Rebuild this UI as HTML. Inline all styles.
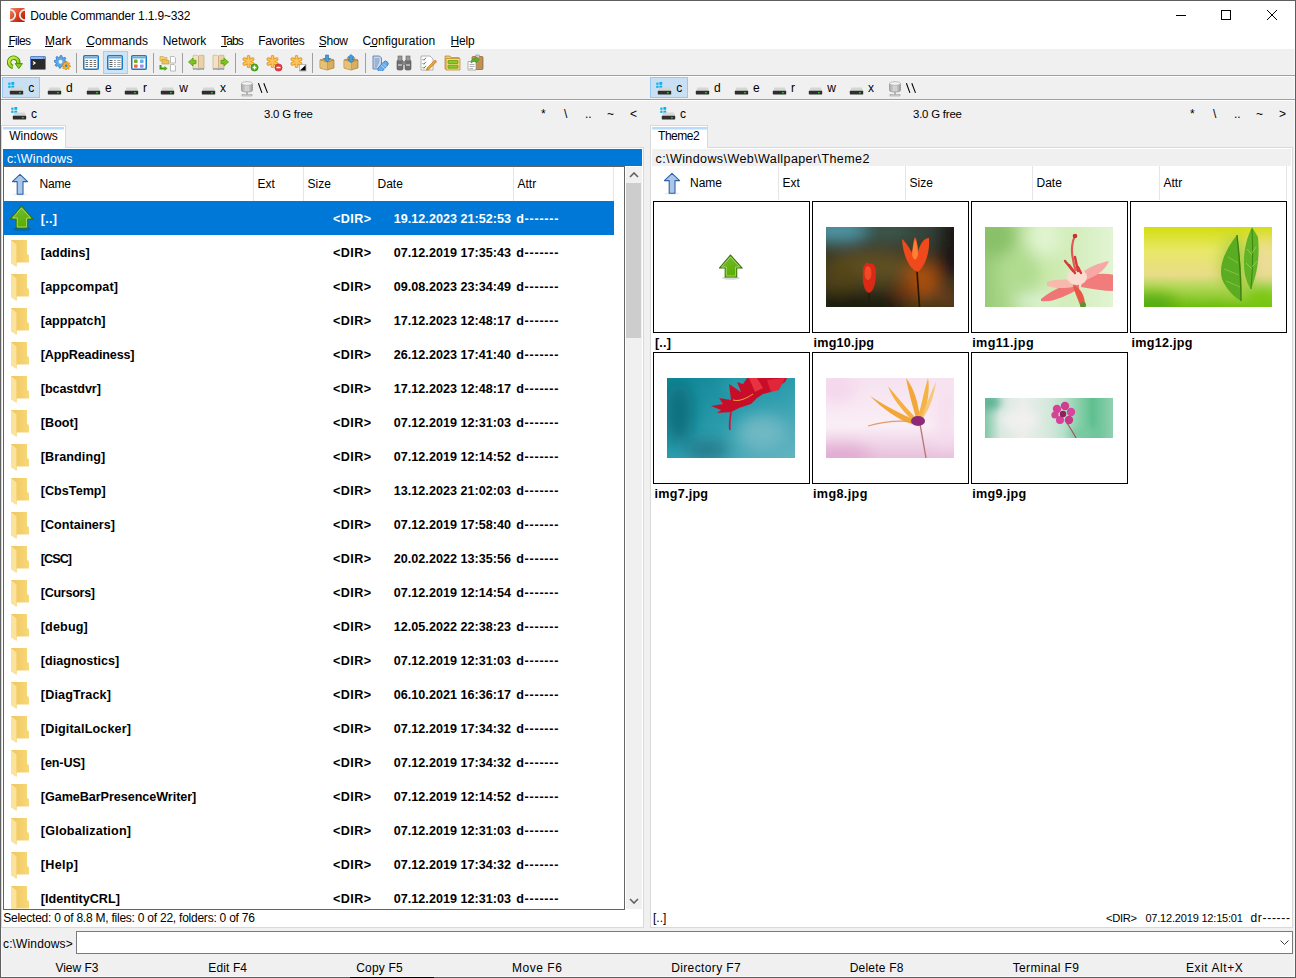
<!DOCTYPE html><html><head><meta charset="utf-8"><style>
*{margin:0;padding:0;box-sizing:border-box}
html,body{width:1296px;height:978px;overflow:hidden;background:#F0F0F0;font-family:"Liberation Sans",sans-serif;color:#000}
div{position:absolute;white-space:nowrap}
.btnsel{background:#C9DFF3;border:1px solid #98C8F0}
.sep{background:#A0A0A0;width:1px;top:53px;height:20px}
svg{display:block}
</style></head><body>
<div style="left:0;top:0;width:1296px;height:978px;border:1px solid #5F5F5F"></div>
<div style="left:350px;top:977px;width:84px;height:1px;background:#000"></div>
<div style="left:1px;top:1px;width:1294px;height:48px;background:#fff"></div>
<div style="left:1294px;top:49px;width:1px;height:928px;background:#F8F8F8"></div>
<div style="left:1px;top:49px;width:1px;height:928px;background:#F8F8F8"></div>
<div style="left:1px;top:976px;width:1294px;height:1px;background:#F8F8F8"></div>
<svg style="position:absolute;left:10px;top:8px" width="15" height="14" viewBox="0 0 15 14"><defs><linearGradient id="dcg" x1="0" y1="0" x2="1" y2="1"><stop offset="0" stop-color="#F08868"/><stop offset="0.6" stop-color="#D83818"/><stop offset="1" stop-color="#B01000"/></linearGradient><clipPath id="dcc"><rect x="0" y="0" width="15" height="14" rx="1.5"/></clipPath></defs><rect x="0" y="0" width="15" height="14" rx="1.5" fill="url(#dcg)"/><g clip-path="url(#dcc)"><circle cx="0" cy="7" r="5.2" stroke="#E4ECEE" stroke-width="1.8" fill="none"/><circle cx="15" cy="7" r="5.2" stroke="#E4ECEE" stroke-width="1.8" fill="none"/></g></svg>
<div style="left:30.20px;top:6px;font-size:12px;line-height:20px;letter-spacing:-0.164px;">Double Commander 1.1.9~332</div>
<div style="left:1176px;top:15px;width:10px;height:1px;background:#000"></div>
<div style="left:1221px;top:10px;width:10px;height:10px;border:1px solid #000"></div>
<svg style="position:absolute;left:1266px;top:9px" width="12" height="12" viewBox="0 0 12 12"><path d="M1 1L11 11M11 1L1 11" stroke="#000" stroke-width="1"/></svg>
<div style="left:8.40px;top:31px;font-size:12px;line-height:20px;letter-spacing:-0.688px;">Files</div>
<div style="left:45.00px;top:31px;font-size:12px;line-height:20px;letter-spacing:-0.033px;">Mark</div>
<div style="left:86.40px;top:31px;font-size:12px;line-height:20px;letter-spacing:0.021px;">Commands</div>
<div style="left:162.70px;top:31px;font-size:12px;line-height:20px;letter-spacing:-0.075px;">Network</div>
<div style="left:221.30px;top:31px;font-size:12px;line-height:20px;letter-spacing:-0.950px;">Tabs</div>
<div style="left:258.20px;top:31px;font-size:12px;line-height:20px;letter-spacing:-0.356px;">Favorites</div>
<div style="left:318.80px;top:31px;font-size:12px;line-height:20px;letter-spacing:-0.267px;">Show</div>
<div style="left:362.60px;top:31px;font-size:12px;line-height:20px;letter-spacing:0.092px;">Configuration</div>
<div style="left:450.50px;top:31px;font-size:12px;line-height:20px;letter-spacing:-0.183px;">Help</div>
<div style="left:8px;top:46px;width:6px;height:1px;background:#000"></div>
<div style="left:45px;top:46px;width:8px;height:1px;background:#000"></div>
<div style="left:86px;top:46px;width:8px;height:1px;background:#000"></div>
<div style="left:221px;top:46px;width:6px;height:1px;background:#000"></div>
<div style="left:319px;top:46px;width:7px;height:1px;background:#000"></div>
<div style="left:370px;top:46px;width:7px;height:1px;background:#000"></div>
<div style="left:451px;top:46px;width:8px;height:1px;background:#000"></div>
<div style="left:103px;top:51px;width:25px;height:23px;background:#CCE4F7;border:1px solid #99D1FF"></div>
<div class="sep" style="left:76px"></div>
<div class="sep" style="left:153px"></div>
<div class="sep" style="left:182px"></div>
<div class="sep" style="left:235px"></div>
<div class="sep" style="left:312px"></div>
<div class="sep" style="left:365px"></div>
<svg style="position:absolute;left:7px;top:55px" width="16" height="15" viewBox="0 0 16 15"><defs><linearGradient id="gr1" x1="0" y1="0" x2="1" y2="1"><stop offset="0" stop-color="#D8F050"/><stop offset="1" stop-color="#78C010"/></linearGradient></defs><path d="M5.9 11.8A4.6 4.6 0 1 1 11.1 8.5" stroke="#3F8F00" stroke-width="4.4" fill="none"/><path d="M5.9 11.8A4.6 4.6 0 1 1 11.1 8.5" stroke="url(#gr1)" stroke-width="2.6" fill="none"/><path d="M8.2 8.6L15.4 8.6L11.8 13.6Z" fill="#8CCB20" stroke="#3F8F00" stroke-width="0.9" stroke-linejoin="round"/></svg>
<svg style="position:absolute;left:30px;top:56px" width="16" height="14" viewBox="0 0 16 14"><rect x="0.5" y="0.5" width="15" height="13" rx="0.8" fill="#2B2B2B" stroke="#5A88CC" stroke-width="1"/><rect x="1" y="1" width="14" height="2" fill="#8DB6EC"/><circle cx="13.6" cy="2" r="0.7" fill="#E84030"/><path d="M3 5.5L5 7L3 8.5" stroke="#fff" stroke-width="1.3" fill="none"/></svg>
<svg style="position:absolute;left:54px;top:55px" width="17" height="15" viewBox="0 0 17 15"><polygon points="12.90,6.80 12.78,8.05 10.76,8.56 10.33,9.36 11.03,11.33 10.06,12.12 8.26,11.06 7.40,11.32 6.50,13.20 5.25,13.08 4.74,11.06 3.94,10.63 1.97,11.33 1.18,10.36 2.24,8.56 1.98,7.70 0.10,6.80 0.22,5.55 2.24,5.04 2.67,4.24 1.97,2.27 2.94,1.48 4.74,2.54 5.60,2.28 6.50,0.40 7.75,0.52 8.26,2.54 9.06,2.97 11.03,2.27 11.82,3.24 10.76,5.04 11.02,5.90" fill="#5AA8E8" stroke="#2E78C8" stroke-width="0.8"/><circle cx="6.5" cy="6.8" r="2.0" fill="#F0F0F0"/><polygon points="16.40,10.80 16.32,11.62 14.99,11.96 14.71,12.48 15.17,13.77 14.53,14.29 13.36,13.59 12.79,13.77 12.20,15.00 11.38,14.92 11.04,13.59 10.52,13.31 9.23,13.77 8.71,13.13 9.41,11.96 9.23,11.39 8.00,10.80 8.08,9.98 9.41,9.64 9.69,9.12 9.23,7.83 9.87,7.31 11.04,8.01 11.61,7.83 12.20,6.60 13.02,6.68 13.36,8.01 13.88,8.29 15.17,7.83 15.69,8.47 14.99,9.64 15.17,10.21" fill="#F6B02E" stroke="#D88A10" stroke-width="0.8"/><circle cx="12.2" cy="10.8" r="1.3" fill="#2E86E0"/></svg>
<svg style="position:absolute;left:83px;top:55px" width="16" height="15" viewBox="0 0 16 15"><rect x="0.75" y="0.75" width="14.5" height="13.5" rx="1" fill="#fff" stroke="#1C7BC0" stroke-width="1.5"/><rect x="2" y="2.2" width="12" height="1.2" fill="#3C9BE0"/><rect x="2.5" y="5" width="2.6" height="1" fill="#707070"/><rect x="6.6" y="5" width="2.6" height="1" fill="#707070"/><rect x="10.6" y="5" width="2.6" height="1" fill="#707070"/><rect x="2.5" y="7" width="2.6" height="1" fill="#707070"/><rect x="6.6" y="7" width="2.6" height="1" fill="#707070"/><rect x="10.6" y="7" width="2.6" height="1" fill="#707070"/><rect x="2.5" y="9" width="2.6" height="1" fill="#707070"/><rect x="6.6" y="9" width="2.6" height="1" fill="#707070"/><rect x="10.6" y="9" width="2.6" height="1" fill="#707070"/><rect x="2.5" y="11" width="2.6" height="1" fill="#707070"/><rect x="6.6" y="11" width="2.6" height="1" fill="#707070"/><rect x="10.6" y="11" width="2.6" height="1" fill="#707070"/></svg>
<svg style="position:absolute;left:107px;top:55px" width="16" height="15" viewBox="0 0 16 15"><rect x="0.75" y="0.75" width="14.5" height="13.5" rx="1" fill="#fff" stroke="#1C7BC0" stroke-width="1.5"/><rect x="2" y="2.2" width="12" height="1.2" fill="#3C9BE0"/><rect x="2.5" y="5" width="3" height="1" fill="#606060"/><rect x="7" y="5" width="2" height="1" fill="#A0A0A0"/><rect x="10.2" y="5" width="3.4" height="1" fill="#A0A0A0"/><rect x="2.5" y="7" width="3" height="1" fill="#606060"/><rect x="7" y="7" width="2" height="1" fill="#A0A0A0"/><rect x="10.2" y="7" width="3.4" height="1" fill="#A0A0A0"/><rect x="2.5" y="9" width="3" height="1" fill="#606060"/><rect x="7" y="9" width="2" height="1" fill="#A0A0A0"/><rect x="10.2" y="9" width="3.4" height="1" fill="#A0A0A0"/><rect x="2.5" y="11" width="3" height="1" fill="#606060"/><rect x="7" y="11" width="2" height="1" fill="#A0A0A0"/><rect x="10.2" y="11" width="3.4" height="1" fill="#A0A0A0"/></svg>
<svg style="position:absolute;left:131px;top:55px" width="16" height="15" viewBox="0 0 16 15"><rect x="0.75" y="0.75" width="14.5" height="13.5" rx="1" fill="#fff" stroke="#1C7BC0" stroke-width="1.5"/><rect x="2" y="2.2" width="12" height="1.2" fill="#3C9BE0"/><rect x="3" y="4.6" width="3.6" height="3.4" rx="0.8" fill="#78A820"/><rect x="9" y="4.6" width="3.6" height="3.4" rx="0.8" fill="#5CB0F0"/><rect x="3" y="9.4" width="3.6" height="3.4" rx="0.8" fill="#F06838"/><rect x="9" y="9.4" width="3.6" height="3.4" rx="0.8" fill="#A888F0"/></svg>
<svg style="position:absolute;left:159px;top:55px" width="18" height="17" viewBox="0 0 18 17"><path d="M1 1.5H4.5L5.5 2.5H8V6H1Z" fill="#F0D070" stroke="#C8A040" stroke-width="0.6"/><path d="M3 4.5H6.5L7.5 5.5H10V9H3Z" fill="#E8C460" stroke="#C09030" stroke-width="0.6"/><path d="M1.5 10V13.5H6" stroke="#3C9A10" stroke-width="2" fill="none"/><path d="M5.5 11L8.5 13.5L5.5 16Z" fill="#4CAA18"/><path d="M11.5 1.5H15L16.5 3V8H11.5Z" fill="#fff" stroke="#A0A0A0" stroke-width="0.7"/><path d="M11.5 9.5H15L16.5 11V16H11.5Z" fill="#fff" stroke="#A0A0A0" stroke-width="0.7"/></svg>
<svg style="position:absolute;left:188px;top:54px" width="17" height="17" viewBox="0 0 17 17"><path d="M5 1.5C7 1 9 1 10.5 2V15C9 14.2 7 14.2 5 15Z" fill="#F2E2C4" stroke="#C8A878" stroke-width="0.6"/><path d="M10.5 2C12 1 14 1 16 1.5V15C14 14.2 12 14.2 10.5 15Z" fill="#E8D2A8" stroke="#C0A070" stroke-width="0.6"/><path d="M5 15.3C7 14.8 9 14.8 10.5 15.6C12 14.8 14 14.8 16 15.3" stroke="#3A80D0" stroke-width="0.9" fill="none"/><path d="M0.5 8L5 4V6.3H8V9.7H5V12Z" fill="#7CC420" stroke="#4E9A00" stroke-width="0.7"/></svg>
<svg style="position:absolute;left:212px;top:54px" width="17" height="17" viewBox="0 0 17 17"><path d="M1 1.5C3 1 5 1 6.5 2V15C5 14.2 3 14.2 1 15Z" fill="#F2E2C4" stroke="#C8A878" stroke-width="0.6"/><path d="M6.5 2C8 1 10 1 12 1.5V15C10 14.2 8 14.2 6.5 15Z" fill="#E8D2A8" stroke="#C0A070" stroke-width="0.6"/><path d="M1 15.3C3 14.8 5 14.8 6.5 15.6C8 14.8 10 14.8 12 15.3" stroke="#3A80D0" stroke-width="0.9" fill="none"/><path d="M16.5 8L12 4V6.3H9V9.7H12V12Z" fill="#7CC420" stroke="#4E9A00" stroke-width="0.7"/></svg>
<svg style="position:absolute;left:242px;top:55px" width="17" height="17" viewBox="0 0 17 17"><g stroke="#E09018" stroke-width="3.6" stroke-linecap="round"><path d="M6.5 1.8V11.2M2.4 4.1L10.6 8.9M2.4 8.9L10.6 4.1"/></g><g stroke="#FBC45C" stroke-width="2.0" stroke-linecap="round"><path d="M6.5 1.8V11.2M2.4 4.1L10.6 8.9M2.4 8.9L10.6 4.1"/></g><circle cx="12.5" cy="12.5" r="3.6" fill="#4AAA1A" stroke="#2E8A00" stroke-width="0.6"/><path d="M10.6 12.5H14.4M12.5 10.6V14.4" stroke="#fff" stroke-width="1.3"/></svg>
<svg style="position:absolute;left:266px;top:55px" width="17" height="17" viewBox="0 0 17 17"><g stroke="#E09018" stroke-width="3.6" stroke-linecap="round"><path d="M6.5 1.8V11.2M2.4 4.1L10.6 8.9M2.4 8.9L10.6 4.1"/></g><g stroke="#FBC45C" stroke-width="2.0" stroke-linecap="round"><path d="M6.5 1.8V11.2M2.4 4.1L10.6 8.9M2.4 8.9L10.6 4.1"/></g><circle cx="12.5" cy="12.5" r="3.6" fill="#E04040" stroke="#B82020" stroke-width="0.6"/><path d="M10.5 12.5H14.5" stroke="#fff" stroke-width="1.4"/></svg>
<svg style="position:absolute;left:290px;top:55px" width="17" height="17" viewBox="0 0 17 17"><g stroke="#E09018" stroke-width="3.6" stroke-linecap="round"><path d="M6.5 1.8V11.2M2.4 4.1L10.6 8.9M2.4 8.9L10.6 4.1"/></g><g stroke="#FBC45C" stroke-width="2.0" stroke-linecap="round"><path d="M6.5 1.8V11.2M2.4 4.1L10.6 8.9M2.4 8.9L10.6 4.1"/></g><rect x="9.5" y="9.5" width="6.5" height="6.5" fill="#fff" stroke="#A0A0A0" stroke-width="0.7"/><path d="M10 15.6L15.6 10V15.6Z" fill="#000"/></svg>
<svg style="position:absolute;left:319px;top:54px" width="16" height="17" viewBox="0 0 16 17"><path d="M1 6L8 3.5L15 6V14L8 16L1 14Z" fill="#D8AE60" stroke="#A87830" stroke-width="0.7"/><path d="M1 6L8 8.3L15 6" stroke="#A87830" stroke-width="0.7" fill="none"/><path d="M8 8.3V16" stroke="#B88840" stroke-width="0.7"/><path d="M1.3 6.2L8 8.4V15.8L1.3 13.8Z" fill="#E6C278"/><path d="M8 8L4.5 4.8H6.5V1H9.5V4.8H11.5Z" fill="#3C9EE8" stroke="#1E70C0" stroke-width="0.6"/></svg>
<svg style="position:absolute;left:343px;top:54px" width="16" height="17" viewBox="0 0 16 17"><path d="M1 6L8 3.5L15 6V14L8 16L1 14Z" fill="#D8AE60" stroke="#A87830" stroke-width="0.7"/><path d="M1 6L8 8.3L15 6" stroke="#A87830" stroke-width="0.7" fill="none"/><path d="M8 8.3V16" stroke="#B88840" stroke-width="0.7"/><path d="M1.3 6.2L8 8.4V15.8L1.3 13.8Z" fill="#E6C278"/><path d="M8 0.5L11.5 3.5H9.5V5.5H11.5L8 8.5L4.5 5.5H6.5V3.5H4.5Z" fill="#3C9EE8" stroke="#1E70C0" stroke-width="0.6"/></svg>
<svg style="position:absolute;left:372px;top:55px" width="17" height="16" viewBox="0 0 17 16"><path d="M1 1H7.5L9.5 3V14H1Z" fill="#C8D8EC" stroke="#5A80B0" stroke-width="0.9"/><path d="M2.5 4H7.5M2.5 6H7.5M2.5 8H7M2.5 10H6M2.5 12H5" stroke="#6A8AB8" stroke-width="0.9"/><path d="M6.5 12.5L11.5 7A2.5 2.5 0 0 1 15.5 10.5L10.5 16A2.5 2.5 0 0 1 6.5 12.5Z" fill="#64ACEC" stroke="#2E74C0" stroke-width="0.8"/><path d="M9 10L13 14M11 8.5L14.5 12" stroke="#C8E4FA" stroke-width="0.7"/></svg>
<svg style="position:absolute;left:396px;top:55px" width="16" height="16" viewBox="0 0 16 16"><rect x="1" y="5" width="6" height="10" rx="1.5" fill="#707070" stroke="#505050" stroke-width="0.6"/><rect x="9" y="5" width="6" height="10" rx="1.5" fill="#707070" stroke="#505050" stroke-width="0.6"/><rect x="2" y="1" width="4" height="5" fill="#9A9A9A" stroke="#606060" stroke-width="0.6"/><rect x="10" y="1" width="4" height="5" fill="#9A9A9A" stroke="#606060" stroke-width="0.6"/><rect x="6.5" y="6" width="3" height="4" fill="#888"/><rect x="2" y="9" width="4" height="2" fill="#B0B0B0"/><rect x="10" y="9" width="4" height="2" fill="#B0B0B0"/></svg>
<svg style="position:absolute;left:420px;top:55px" width="17" height="16" viewBox="0 0 17 16"><path d="M1 1H10L13 4V15H1Z" fill="#fff" stroke="#A0A0A0" stroke-width="0.8"/><path d="M2.5 4L3.8 5.3L6 2.8M2.5 8L3.8 9.3L6 6.8M2.5 12L3.8 13.3L6 10.8" stroke="#30A030" stroke-width="1" fill="none"/><path d="M7 13L14.5 5.5L16.2 7.2L8.7 14.7L6.5 15.2Z" fill="#F0A030" stroke="#B07010" stroke-width="0.6"/><path d="M14.5 5.5L16.2 7.2L17 6.4L15.3 4.7Z" fill="#E878A8"/></svg>
<svg style="position:absolute;left:444px;top:54px" width="17" height="17" viewBox="0 0 17 17"><path d="M1 2H6L7 3.5H15V15H1Z" fill="#EFC870" stroke="#B88828" stroke-width="0.7"/><path d="M2 4.5H16V16H2Z" fill="#F6D888" stroke="#B88828" stroke-width="0.7"/><rect x="4" y="6.5" width="10" height="3" rx="0.5" fill="#8CC820" stroke="#4E9000" stroke-width="0.6"/><rect x="4" y="11.2" width="10" height="3" rx="0.5" fill="#8CC820" stroke="#4E9000" stroke-width="0.6"/></svg>
<svg style="position:absolute;left:467px;top:54px" width="17" height="17" viewBox="0 0 17 17"><rect x="5" y="2.5" width="11" height="13" rx="1" fill="#C09058" stroke="#886030" stroke-width="0.7"/><rect x="8.5" y="1" width="4" height="3" rx="0.8" fill="#D0D0D0" stroke="#808080" stroke-width="0.6"/><path d="M1 7.5H9V16H1Z" fill="#fff" stroke="#909090" stroke-width="0.7"/><path d="M2.5 10.5H7.5M2.5 12.5H7.5M2.5 14.5H6" stroke="#909090" stroke-width="0.7"/><path d="M4 9C4 6 6 4.5 9 4.5V2.8L12 5.8L9 8.8V7C7 7 5.5 7.8 4 9Z" fill="#5CB82A" stroke="#3A8A10" stroke-width="0.6"/></svg>
<div style="left:1px;top:75px;width:1294px;height:1px;background:#A0A0A0"></div>
<div style="left:1px;top:76px;width:1294px;height:1px;background:#FFFFFF"></div>
<div style="left:1px;top:99px;width:1294px;height:1px;background:#A0A0A0"></div>
<div style="left:1px;top:100px;width:1294px;height:1px;background:#FFFFFF"></div>
<div class="btnsel" style="left:2px;top:77px;width:38px;height:21px"></div>
<svg style="position:absolute;left:8px;top:82px" width="18" height="16" viewBox="0 0 18 16"><rect x="0.3" y="0.6" width="2.2" height="2.2" fill="#00B4F0"/><rect x="3.4" y="0" width="2.8" height="2.8" fill="#00B4F0"/><rect x="0.3" y="3.7" width="2.2" height="2.2" fill="#00B4F0"/><rect x="3.4" y="3.7" width="2.8" height="2.8" fill="#00B4F0"/><path d="M3.5 5.5H13.8L15.2 9H2.1Z" fill="#D6D6D6"/><rect x="1.8" y="8.8" width="13.4" height="3.6" rx="0.6" fill="#2E2E2E"/><rect x="11.2" y="10.1" width="1.4" height="1.2" fill="#3CF03C"/></svg>
<div style="left:28.20px;top:78px;font-size:12px;line-height:20px;">c</div>
<svg style="position:absolute;left:46px;top:82px" width="18" height="16" viewBox="0 0 18 16"><path d="M3.5 5.5H13.8L15.2 9H2.1Z" fill="#D6D6D6"/><rect x="1.8" y="8.8" width="13.4" height="3.6" rx="0.6" fill="#2E2E2E"/><rect x="11.2" y="10.1" width="1.4" height="1.2" fill="#3CF03C"/></svg>
<div style="left:66.00px;top:78px;font-size:12px;line-height:20px;">d</div>
<svg style="position:absolute;left:85px;top:82px" width="18" height="16" viewBox="0 0 18 16"><path d="M3.5 5.5H13.8L15.2 9H2.1Z" fill="#D6D6D6"/><rect x="1.8" y="8.8" width="13.4" height="3.6" rx="0.6" fill="#2E2E2E"/><rect x="11.2" y="10.1" width="1.4" height="1.2" fill="#3CF03C"/></svg>
<div style="left:105.00px;top:78px;font-size:12px;line-height:20px;">e</div>
<svg style="position:absolute;left:123px;top:82px" width="18" height="16" viewBox="0 0 18 16"><path d="M3.5 5.5H13.8L15.2 9H2.1Z" fill="#D6D6D6"/><rect x="1.8" y="8.8" width="13.4" height="3.6" rx="0.6" fill="#2E2E2E"/><rect x="11.2" y="10.1" width="1.4" height="1.2" fill="#3CF03C"/></svg>
<div style="left:143.00px;top:78px;font-size:12px;line-height:20px;">r</div>
<svg style="position:absolute;left:159px;top:82px" width="18" height="16" viewBox="0 0 18 16"><path d="M3.5 5.5H13.8L15.2 9H2.1Z" fill="#D6D6D6"/><rect x="1.8" y="8.8" width="13.4" height="3.6" rx="0.6" fill="#2E2E2E"/><rect x="11.2" y="10.1" width="1.4" height="1.2" fill="#3CF03C"/></svg>
<div style="left:179.25px;top:78px;font-size:12px;line-height:20px;">w</div>
<svg style="position:absolute;left:200px;top:82px" width="18" height="16" viewBox="0 0 18 16"><path d="M3.5 5.5H13.8L15.2 9H2.1Z" fill="#D6D6D6"/><rect x="1.8" y="8.8" width="13.4" height="3.6" rx="0.6" fill="#2E2E2E"/><rect x="11.2" y="10.1" width="1.4" height="1.2" fill="#3CF03C"/></svg>
<div style="left:220.00px;top:78px;font-size:12px;line-height:20px;">x</div>
<svg style="position:absolute;left:240px;top:81px" width="14" height="16" viewBox="0 0 14 16"><defs><linearGradient id="ng" x1="0" y1="0" x2="1" y2="0"><stop offset="0" stop-color="#A8A8A8"/><stop offset="0.5" stop-color="#E8E8E8"/><stop offset="1" stop-color="#9A9A9A"/></linearGradient></defs><path d="M1.5 2.5V9.5C1.5 11.5 12.5 11.5 12.5 9.5V2.5" fill="url(#ng)" stroke="#8a8a8a" stroke-width="0.6"/><ellipse cx="7" cy="2.5" rx="5.5" ry="1.8" fill="#F4F4F4" stroke="#9a9a9a" stroke-width="0.6"/><path d="M4 5V9M7 5V10M10 5V9" stroke="#B8B8B8" stroke-width="0.8"/><rect x="6.3" y="10.5" width="1.4" height="3" fill="#A0A0A0"/><rect x="2" y="13.6" width="10" height="1.4" fill="#D8D8D8" stroke="#909090" stroke-width="0.5"/></svg>
<svg style="position:absolute;left:256px;top:82px" width="14" height="13" viewBox="0 0 14 13"><path d="M2.4 1.3L5.9 10.9M7.8 1.3L11.5 10.9" stroke="#000" stroke-width="1.05"/></svg>
<div class="btnsel" style="left:650px;top:77px;width:38px;height:21px"></div>
<svg style="position:absolute;left:656px;top:82px" width="18" height="16" viewBox="0 0 18 16"><rect x="0.3" y="0.6" width="2.2" height="2.2" fill="#00B4F0"/><rect x="3.4" y="0" width="2.8" height="2.8" fill="#00B4F0"/><rect x="0.3" y="3.7" width="2.2" height="2.2" fill="#00B4F0"/><rect x="3.4" y="3.7" width="2.8" height="2.8" fill="#00B4F0"/><path d="M3.5 5.5H13.8L15.2 9H2.1Z" fill="#D6D6D6"/><rect x="1.8" y="8.8" width="13.4" height="3.6" rx="0.6" fill="#2E2E2E"/><rect x="11.2" y="10.1" width="1.4" height="1.2" fill="#3CF03C"/></svg>
<div style="left:676.20px;top:78px;font-size:12px;line-height:20px;">c</div>
<svg style="position:absolute;left:694px;top:82px" width="18" height="16" viewBox="0 0 18 16"><path d="M3.5 5.5H13.8L15.2 9H2.1Z" fill="#D6D6D6"/><rect x="1.8" y="8.8" width="13.4" height="3.6" rx="0.6" fill="#2E2E2E"/><rect x="11.2" y="10.1" width="1.4" height="1.2" fill="#3CF03C"/></svg>
<div style="left:714.00px;top:78px;font-size:12px;line-height:20px;">d</div>
<svg style="position:absolute;left:733px;top:82px" width="18" height="16" viewBox="0 0 18 16"><path d="M3.5 5.5H13.8L15.2 9H2.1Z" fill="#D6D6D6"/><rect x="1.8" y="8.8" width="13.4" height="3.6" rx="0.6" fill="#2E2E2E"/><rect x="11.2" y="10.1" width="1.4" height="1.2" fill="#3CF03C"/></svg>
<div style="left:753.00px;top:78px;font-size:12px;line-height:20px;">e</div>
<svg style="position:absolute;left:771px;top:82px" width="18" height="16" viewBox="0 0 18 16"><path d="M3.5 5.5H13.8L15.2 9H2.1Z" fill="#D6D6D6"/><rect x="1.8" y="8.8" width="13.4" height="3.6" rx="0.6" fill="#2E2E2E"/><rect x="11.2" y="10.1" width="1.4" height="1.2" fill="#3CF03C"/></svg>
<div style="left:791.00px;top:78px;font-size:12px;line-height:20px;">r</div>
<svg style="position:absolute;left:807px;top:82px" width="18" height="16" viewBox="0 0 18 16"><path d="M3.5 5.5H13.8L15.2 9H2.1Z" fill="#D6D6D6"/><rect x="1.8" y="8.8" width="13.4" height="3.6" rx="0.6" fill="#2E2E2E"/><rect x="11.2" y="10.1" width="1.4" height="1.2" fill="#3CF03C"/></svg>
<div style="left:827.25px;top:78px;font-size:12px;line-height:20px;">w</div>
<svg style="position:absolute;left:848px;top:82px" width="18" height="16" viewBox="0 0 18 16"><path d="M3.5 5.5H13.8L15.2 9H2.1Z" fill="#D6D6D6"/><rect x="1.8" y="8.8" width="13.4" height="3.6" rx="0.6" fill="#2E2E2E"/><rect x="11.2" y="10.1" width="1.4" height="1.2" fill="#3CF03C"/></svg>
<div style="left:868.00px;top:78px;font-size:12px;line-height:20px;">x</div>
<svg style="position:absolute;left:888px;top:81px" width="14" height="16" viewBox="0 0 14 16"><defs><linearGradient id="ng" x1="0" y1="0" x2="1" y2="0"><stop offset="0" stop-color="#A8A8A8"/><stop offset="0.5" stop-color="#E8E8E8"/><stop offset="1" stop-color="#9A9A9A"/></linearGradient></defs><path d="M1.5 2.5V9.5C1.5 11.5 12.5 11.5 12.5 9.5V2.5" fill="url(#ng)" stroke="#8a8a8a" stroke-width="0.6"/><ellipse cx="7" cy="2.5" rx="5.5" ry="1.8" fill="#F4F4F4" stroke="#9a9a9a" stroke-width="0.6"/><path d="M4 5V9M7 5V10M10 5V9" stroke="#B8B8B8" stroke-width="0.8"/><rect x="6.3" y="10.5" width="1.4" height="3" fill="#A0A0A0"/><rect x="2" y="13.6" width="10" height="1.4" fill="#D8D8D8" stroke="#909090" stroke-width="0.5"/></svg>
<svg style="position:absolute;left:904px;top:82px" width="14" height="13" viewBox="0 0 14 13"><path d="M2.4 1.3L5.9 10.9M7.8 1.3L11.5 10.9" stroke="#000" stroke-width="1.05"/></svg>
<svg style="position:absolute;left:11px;top:107px" width="18" height="16" viewBox="0 0 18 16"><rect x="0.3" y="0.6" width="2.2" height="2.2" fill="#00B4F0"/><rect x="3.4" y="0" width="2.8" height="2.8" fill="#00B4F0"/><rect x="0.3" y="3.7" width="2.2" height="2.2" fill="#00B4F0"/><rect x="3.4" y="3.7" width="2.8" height="2.8" fill="#00B4F0"/><path d="M3.5 5.5H13.8L15.2 9H2.1Z" fill="#D6D6D6"/><rect x="1.8" y="8.8" width="13.4" height="3.6" rx="0.6" fill="#2E2E2E"/><rect x="11.2" y="10.1" width="1.4" height="1.2" fill="#3CF03C"/></svg>
<div style="left:31.00px;top:104px;font-size:12px;line-height:20px;">c</div>
<div style="left:264.00px;top:104px;font-size:11.4px;line-height:20px;letter-spacing:-0.194px;">3.0 G free</div>
<div style="left:541.00px;top:104px;font-size:12px;line-height:20px;">*</div>
<div style="left:564.00px;top:104px;font-size:12px;line-height:20px;">\</div>
<div style="left:585.00px;top:104px;font-size:12px;line-height:20px;">..</div>
<div style="left:607.00px;top:104px;font-size:12px;line-height:20px;">~</div>
<div style="left:630.00px;top:104px;font-size:12px;line-height:20px;">&lt;</div>
<svg style="position:absolute;left:660px;top:107px" width="18" height="16" viewBox="0 0 18 16"><rect x="0.3" y="0.6" width="2.2" height="2.2" fill="#00B4F0"/><rect x="3.4" y="0" width="2.8" height="2.8" fill="#00B4F0"/><rect x="0.3" y="3.7" width="2.2" height="2.2" fill="#00B4F0"/><rect x="3.4" y="3.7" width="2.8" height="2.8" fill="#00B4F0"/><path d="M3.5 5.5H13.8L15.2 9H2.1Z" fill="#D6D6D6"/><rect x="1.8" y="8.8" width="13.4" height="3.6" rx="0.6" fill="#2E2E2E"/><rect x="11.2" y="10.1" width="1.4" height="1.2" fill="#3CF03C"/></svg>
<div style="left:680.00px;top:104px;font-size:12px;line-height:20px;">c</div>
<div style="left:913.00px;top:104px;font-size:11.4px;line-height:20px;letter-spacing:-0.194px;">3.0 G free</div>
<div style="left:1190.00px;top:104px;font-size:12px;line-height:20px;">*</div>
<div style="left:1213.00px;top:104px;font-size:12px;line-height:20px;">\</div>
<div style="left:1234.00px;top:104px;font-size:12px;line-height:20px;">..</div>
<div style="left:1256.00px;top:104px;font-size:12px;line-height:20px;">~</div>
<div style="left:1279.00px;top:104px;font-size:12px;line-height:20px;">&gt;</div>
<div style="left:1px;top:147px;width:643px;height:781px;border:1px solid #D9D9D9;background:#fff"></div>
<div style="left:650px;top:147px;width:643px;height:781px;border:1px solid #D9D9D9;background:#fff"></div>
<div style="left:1px;top:125px;width:65px;height:23px;background:#fff;border:1px solid #D9D9D9;border-bottom:none"></div>
<div style="left:3px;top:127px;width:61px;height:2px;background:#B8DBF9"></div>
<div style="left:3px;top:129px;width:61px;height:1px;background:#DCEDFC"></div>
<div style="left:9.30px;top:126px;font-size:12px;line-height:20px;letter-spacing:-0.025px;">Windows</div>
<div style="left:650px;top:125px;width:58px;height:23px;background:#fff;border:1px solid #D9D9D9;border-bottom:none"></div>
<div style="left:652px;top:127px;width:55px;height:2px;background:#B8DBF9"></div>
<div style="left:652px;top:129px;width:55px;height:1px;background:#DCEDFC"></div>
<div style="left:658.10px;top:126px;font-size:12px;line-height:20px;letter-spacing:-0.500px;">Theme2</div>
<div style="left:3px;top:149px;width:639px;height:17px;background:#0078D7"></div>
<div style="left:6.90px;top:149px;font-size:12.5px;line-height:20px;letter-spacing:0.200px;color:#fff;">c:\Windows</div>
<div style="left:652px;top:149px;width:639px;height:17px;background:#F0F0F0"></div>
<div style="left:655.50px;top:149px;font-size:12.5px;line-height:20px;letter-spacing:0.413px;">c:\Windows\Web\Wallpaper\Theme2</div>
<div style="left:3px;top:166px;width:622px;height:744px;border:1px solid #646464;background:#fff;overflow:hidden">
<svg style="position:absolute;left:8px;top:6px" width="20" height="24" viewBox="0 0 20 24"><ellipse cx="8" cy="21.5" rx="8" ry="1.2" fill="rgba(0,0,0,0.07)"/><path d="M8 1.4L15.6 8.6H11V21.2H5.2V8.6H0.4Z" fill="#AAC7E7" stroke="#2F62AA" stroke-width="1.1" stroke-linejoin="round"/></svg>
<div style="left:35.60px;top:7px;font-size:12px;line-height:20px;letter-spacing:-0.200px;">Name</div>
<div style="left:249px;top:0;width:1px;height:34px;background:#E5E5E5"></div>
<div style="left:253.50px;top:7px;font-size:12px;line-height:20px;">Ext</div>
<div style="left:299px;top:0;width:1px;height:34px;background:#E5E5E5"></div>
<div style="left:303.50px;top:7px;font-size:12px;line-height:20px;">Size</div>
<div style="left:369px;top:0;width:1px;height:34px;background:#E5E5E5"></div>
<div style="left:373.50px;top:7px;font-size:12px;line-height:20px;">Date</div>
<div style="left:509px;top:0;width:1px;height:34px;background:#E5E5E5"></div>
<div style="left:513.50px;top:7px;font-size:12px;line-height:20px;">Attr</div>
<div style="left:609px;top:0;width:1px;height:34px;background:#E5E5E5"></div>
<div style="left:0;top:34px;width:610px;height:34px;background:#0078D7"></div>
<svg style="position:absolute;left:6px;top:38px" width="26" height="26" viewBox="0 0 26 26"><defs><linearGradient id="gg638" x1="0" y1="0" x2="0.3" y2="1"><stop offset="0" stop-color="#7CB83A"/><stop offset="1" stop-color="#58B000"/></linearGradient></defs><ellipse cx="12" cy="24" rx="9" ry="1.8" fill="rgba(0,0,0,0.15)"/><path d="M11.5 1L23 14H17.7V23H6.2V14H0.5Z" fill="url(#gg638)" stroke="#3A7000" stroke-width="1.1" stroke-linejoin="miter"/><path d="M11.5 3L20.6 13H16.6V22H7.3V13H2.6Z" fill="none" stroke="#A8D870" stroke-width="0.9"/></svg>
<div style="left:36.80px;top:42px;font-size:12.6px;line-height:20px;font-weight:bold;letter-spacing:0.267px;color:#fff;">[..]</div>
<div style="left:329.00px;top:42px;font-size:12.6px;line-height:20px;font-weight:bold;letter-spacing:0.425px;color:#fff;">&lt;DIR&gt;</div>
<div style="left:389.80px;top:42px;font-size:12.6px;line-height:20px;font-weight:bold;letter-spacing:0.011px;color:#fff;">19.12.2023 21:52:53</div>
<div style="left:512.20px;top:42px;font-size:12.6px;line-height:20px;font-weight:bold;letter-spacing:0.729px;color:#fff;">d-------</div>
<svg style="position:absolute;left:6px;top:72px" width="20" height="28" viewBox="0 0 20 28"><defs><linearGradient id="fb" x1="0" y1="0" x2="1" y2="0"><stop offset="0" stop-color="#EEC660"/><stop offset="1" stop-color="#F8D878"/></linearGradient></defs><path d="M1 1H17V14.5L19 16.5V23.5H6V27.5L1 24Z" fill="url(#fb)"/><path d="M1 1L6.5 5.5V27.5L1 24Z" fill="#FCE39C"/><path d="M6.5 5.5V27.5" stroke="#F6D47A" stroke-width="0.6"/></svg>
<div style="left:36.80px;top:76px;font-size:12.6px;line-height:20px;font-weight:bold;letter-spacing:-0.014px;">[addins]</div>
<div style="left:329.00px;top:76px;font-size:12.6px;line-height:20px;font-weight:bold;letter-spacing:0.425px;">&lt;DIR&gt;</div>
<div style="left:389.80px;top:76px;font-size:12.6px;line-height:20px;font-weight:bold;letter-spacing:0.011px;">07.12.2019 17:35:43</div>
<div style="left:512.20px;top:76px;font-size:12.6px;line-height:20px;font-weight:bold;letter-spacing:0.729px;">d-------</div>
<svg style="position:absolute;left:6px;top:106px" width="20" height="28" viewBox="0 0 20 28"><defs><linearGradient id="fb" x1="0" y1="0" x2="1" y2="0"><stop offset="0" stop-color="#EEC660"/><stop offset="1" stop-color="#F8D878"/></linearGradient></defs><path d="M1 1H17V14.5L19 16.5V23.5H6V27.5L1 24Z" fill="url(#fb)"/><path d="M1 1L6.5 5.5V27.5L1 24Z" fill="#FCE39C"/><path d="M6.5 5.5V27.5" stroke="#F6D47A" stroke-width="0.6"/></svg>
<div style="left:36.80px;top:110px;font-size:12.6px;line-height:20px;font-weight:bold;letter-spacing:0.160px;">[appcompat]</div>
<div style="left:329.00px;top:110px;font-size:12.6px;line-height:20px;font-weight:bold;letter-spacing:0.425px;">&lt;DIR&gt;</div>
<div style="left:389.80px;top:110px;font-size:12.6px;line-height:20px;font-weight:bold;letter-spacing:0.011px;">09.08.2023 23:34:49</div>
<div style="left:512.20px;top:110px;font-size:12.6px;line-height:20px;font-weight:bold;letter-spacing:0.729px;">d-------</div>
<svg style="position:absolute;left:6px;top:140px" width="20" height="28" viewBox="0 0 20 28"><defs><linearGradient id="fb" x1="0" y1="0" x2="1" y2="0"><stop offset="0" stop-color="#EEC660"/><stop offset="1" stop-color="#F8D878"/></linearGradient></defs><path d="M1 1H17V14.5L19 16.5V23.5H6V27.5L1 24Z" fill="url(#fb)"/><path d="M1 1L6.5 5.5V27.5L1 24Z" fill="#FCE39C"/><path d="M6.5 5.5V27.5" stroke="#F6D47A" stroke-width="0.6"/></svg>
<div style="left:36.80px;top:144px;font-size:12.6px;line-height:20px;font-weight:bold;letter-spacing:0.044px;">[apppatch]</div>
<div style="left:329.00px;top:144px;font-size:12.6px;line-height:20px;font-weight:bold;letter-spacing:0.425px;">&lt;DIR&gt;</div>
<div style="left:389.80px;top:144px;font-size:12.6px;line-height:20px;font-weight:bold;letter-spacing:0.011px;">17.12.2023 12:48:17</div>
<div style="left:512.20px;top:144px;font-size:12.6px;line-height:20px;font-weight:bold;letter-spacing:0.729px;">d-------</div>
<svg style="position:absolute;left:6px;top:174px" width="20" height="28" viewBox="0 0 20 28"><defs><linearGradient id="fb" x1="0" y1="0" x2="1" y2="0"><stop offset="0" stop-color="#EEC660"/><stop offset="1" stop-color="#F8D878"/></linearGradient></defs><path d="M1 1H17V14.5L19 16.5V23.5H6V27.5L1 24Z" fill="url(#fb)"/><path d="M1 1L6.5 5.5V27.5L1 24Z" fill="#FCE39C"/><path d="M6.5 5.5V27.5" stroke="#F6D47A" stroke-width="0.6"/></svg>
<div style="left:36.80px;top:178px;font-size:12.6px;line-height:20px;font-weight:bold;letter-spacing:-0.162px;">[AppReadiness]</div>
<div style="left:329.00px;top:178px;font-size:12.6px;line-height:20px;font-weight:bold;letter-spacing:0.425px;">&lt;DIR&gt;</div>
<div style="left:389.80px;top:178px;font-size:12.6px;line-height:20px;font-weight:bold;letter-spacing:0.011px;">26.12.2023 17:41:40</div>
<div style="left:512.20px;top:178px;font-size:12.6px;line-height:20px;font-weight:bold;letter-spacing:0.729px;">d-------</div>
<svg style="position:absolute;left:6px;top:208px" width="20" height="28" viewBox="0 0 20 28"><defs><linearGradient id="fb" x1="0" y1="0" x2="1" y2="0"><stop offset="0" stop-color="#EEC660"/><stop offset="1" stop-color="#F8D878"/></linearGradient></defs><path d="M1 1H17V14.5L19 16.5V23.5H6V27.5L1 24Z" fill="url(#fb)"/><path d="M1 1L6.5 5.5V27.5L1 24Z" fill="#FCE39C"/><path d="M6.5 5.5V27.5" stroke="#F6D47A" stroke-width="0.6"/></svg>
<div style="left:36.80px;top:212px;font-size:12.6px;line-height:20px;font-weight:bold;letter-spacing:-0.089px;">[bcastdvr]</div>
<div style="left:329.00px;top:212px;font-size:12.6px;line-height:20px;font-weight:bold;letter-spacing:0.425px;">&lt;DIR&gt;</div>
<div style="left:389.80px;top:212px;font-size:12.6px;line-height:20px;font-weight:bold;letter-spacing:0.011px;">17.12.2023 12:48:17</div>
<div style="left:512.20px;top:212px;font-size:12.6px;line-height:20px;font-weight:bold;letter-spacing:0.729px;">d-------</div>
<svg style="position:absolute;left:6px;top:242px" width="20" height="28" viewBox="0 0 20 28"><defs><linearGradient id="fb" x1="0" y1="0" x2="1" y2="0"><stop offset="0" stop-color="#EEC660"/><stop offset="1" stop-color="#F8D878"/></linearGradient></defs><path d="M1 1H17V14.5L19 16.5V23.5H6V27.5L1 24Z" fill="url(#fb)"/><path d="M1 1L6.5 5.5V27.5L1 24Z" fill="#FCE39C"/><path d="M6.5 5.5V27.5" stroke="#F6D47A" stroke-width="0.6"/></svg>
<div style="left:36.80px;top:246px;font-size:12.6px;line-height:20px;font-weight:bold;letter-spacing:0.020px;">[Boot]</div>
<div style="left:329.00px;top:246px;font-size:12.6px;line-height:20px;font-weight:bold;letter-spacing:0.425px;">&lt;DIR&gt;</div>
<div style="left:389.80px;top:246px;font-size:12.6px;line-height:20px;font-weight:bold;letter-spacing:0.011px;">07.12.2019 12:31:03</div>
<div style="left:512.20px;top:246px;font-size:12.6px;line-height:20px;font-weight:bold;letter-spacing:0.729px;">d-------</div>
<svg style="position:absolute;left:6px;top:276px" width="20" height="28" viewBox="0 0 20 28"><defs><linearGradient id="fb" x1="0" y1="0" x2="1" y2="0"><stop offset="0" stop-color="#EEC660"/><stop offset="1" stop-color="#F8D878"/></linearGradient></defs><path d="M1 1H17V14.5L19 16.5V23.5H6V27.5L1 24Z" fill="url(#fb)"/><path d="M1 1L6.5 5.5V27.5L1 24Z" fill="#FCE39C"/><path d="M6.5 5.5V27.5" stroke="#F6D47A" stroke-width="0.6"/></svg>
<div style="left:36.80px;top:280px;font-size:12.6px;line-height:20px;font-weight:bold;letter-spacing:0.072px;">[Branding]</div>
<div style="left:329.00px;top:280px;font-size:12.6px;line-height:20px;font-weight:bold;letter-spacing:0.425px;">&lt;DIR&gt;</div>
<div style="left:389.80px;top:280px;font-size:12.6px;line-height:20px;font-weight:bold;letter-spacing:0.011px;">07.12.2019 12:14:52</div>
<div style="left:512.20px;top:280px;font-size:12.6px;line-height:20px;font-weight:bold;letter-spacing:0.729px;">d-------</div>
<svg style="position:absolute;left:6px;top:310px" width="20" height="28" viewBox="0 0 20 28"><defs><linearGradient id="fb" x1="0" y1="0" x2="1" y2="0"><stop offset="0" stop-color="#EEC660"/><stop offset="1" stop-color="#F8D878"/></linearGradient></defs><path d="M1 1H17V14.5L19 16.5V23.5H6V27.5L1 24Z" fill="url(#fb)"/><path d="M1 1L6.5 5.5V27.5L1 24Z" fill="#FCE39C"/><path d="M6.5 5.5V27.5" stroke="#F6D47A" stroke-width="0.6"/></svg>
<div style="left:36.80px;top:314px;font-size:12.6px;line-height:20px;font-weight:bold;letter-spacing:0.019px;">[CbsTemp]</div>
<div style="left:329.00px;top:314px;font-size:12.6px;line-height:20px;font-weight:bold;letter-spacing:0.425px;">&lt;DIR&gt;</div>
<div style="left:389.80px;top:314px;font-size:12.6px;line-height:20px;font-weight:bold;letter-spacing:0.011px;">13.12.2023 21:02:03</div>
<div style="left:512.20px;top:314px;font-size:12.6px;line-height:20px;font-weight:bold;letter-spacing:0.729px;">d-------</div>
<svg style="position:absolute;left:6px;top:344px" width="20" height="28" viewBox="0 0 20 28"><defs><linearGradient id="fb" x1="0" y1="0" x2="1" y2="0"><stop offset="0" stop-color="#EEC660"/><stop offset="1" stop-color="#F8D878"/></linearGradient></defs><path d="M1 1H17V14.5L19 16.5V23.5H6V27.5L1 24Z" fill="url(#fb)"/><path d="M1 1L6.5 5.5V27.5L1 24Z" fill="#FCE39C"/><path d="M6.5 5.5V27.5" stroke="#F6D47A" stroke-width="0.6"/></svg>
<div style="left:36.80px;top:348px;font-size:12.6px;line-height:20px;font-weight:bold;">[Containers]</div>
<div style="left:329.00px;top:348px;font-size:12.6px;line-height:20px;font-weight:bold;letter-spacing:0.425px;">&lt;DIR&gt;</div>
<div style="left:389.80px;top:348px;font-size:12.6px;line-height:20px;font-weight:bold;letter-spacing:0.011px;">07.12.2019 17:58:40</div>
<div style="left:512.20px;top:348px;font-size:12.6px;line-height:20px;font-weight:bold;letter-spacing:0.729px;">d-------</div>
<svg style="position:absolute;left:6px;top:378px" width="20" height="28" viewBox="0 0 20 28"><defs><linearGradient id="fb" x1="0" y1="0" x2="1" y2="0"><stop offset="0" stop-color="#EEC660"/><stop offset="1" stop-color="#F8D878"/></linearGradient></defs><path d="M1 1H17V14.5L19 16.5V23.5H6V27.5L1 24Z" fill="url(#fb)"/><path d="M1 1L6.5 5.5V27.5L1 24Z" fill="#FCE39C"/><path d="M6.5 5.5V27.5" stroke="#F6D47A" stroke-width="0.6"/></svg>
<div style="left:36.80px;top:382px;font-size:12.6px;line-height:20px;font-weight:bold;letter-spacing:-0.950px;">[CSC]</div>
<div style="left:329.00px;top:382px;font-size:12.6px;line-height:20px;font-weight:bold;letter-spacing:0.425px;">&lt;DIR&gt;</div>
<div style="left:389.80px;top:382px;font-size:12.6px;line-height:20px;font-weight:bold;letter-spacing:0.011px;">20.02.2022 13:35:56</div>
<div style="left:512.20px;top:382px;font-size:12.6px;line-height:20px;font-weight:bold;letter-spacing:0.729px;">d-------</div>
<svg style="position:absolute;left:6px;top:412px" width="20" height="28" viewBox="0 0 20 28"><defs><linearGradient id="fb" x1="0" y1="0" x2="1" y2="0"><stop offset="0" stop-color="#EEC660"/><stop offset="1" stop-color="#F8D878"/></linearGradient></defs><path d="M1 1H17V14.5L19 16.5V23.5H6V27.5L1 24Z" fill="url(#fb)"/><path d="M1 1L6.5 5.5V27.5L1 24Z" fill="#FCE39C"/><path d="M6.5 5.5V27.5" stroke="#F6D47A" stroke-width="0.6"/></svg>
<div style="left:36.80px;top:416px;font-size:12.6px;line-height:20px;font-weight:bold;letter-spacing:-0.306px;">[Cursors]</div>
<div style="left:329.00px;top:416px;font-size:12.6px;line-height:20px;font-weight:bold;letter-spacing:0.425px;">&lt;DIR&gt;</div>
<div style="left:389.80px;top:416px;font-size:12.6px;line-height:20px;font-weight:bold;letter-spacing:0.011px;">07.12.2019 12:14:54</div>
<div style="left:512.20px;top:416px;font-size:12.6px;line-height:20px;font-weight:bold;letter-spacing:0.729px;">d-------</div>
<svg style="position:absolute;left:6px;top:446px" width="20" height="28" viewBox="0 0 20 28"><defs><linearGradient id="fb" x1="0" y1="0" x2="1" y2="0"><stop offset="0" stop-color="#EEC660"/><stop offset="1" stop-color="#F8D878"/></linearGradient></defs><path d="M1 1H17V14.5L19 16.5V23.5H6V27.5L1 24Z" fill="url(#fb)"/><path d="M1 1L6.5 5.5V27.5L1 24Z" fill="#FCE39C"/><path d="M6.5 5.5V27.5" stroke="#F6D47A" stroke-width="0.6"/></svg>
<div style="left:36.80px;top:450px;font-size:12.6px;line-height:20px;font-weight:bold;letter-spacing:0.125px;">[debug]</div>
<div style="left:329.00px;top:450px;font-size:12.6px;line-height:20px;font-weight:bold;letter-spacing:0.425px;">&lt;DIR&gt;</div>
<div style="left:389.80px;top:450px;font-size:12.6px;line-height:20px;font-weight:bold;letter-spacing:0.011px;">12.05.2022 22:38:23</div>
<div style="left:512.20px;top:450px;font-size:12.6px;line-height:20px;font-weight:bold;letter-spacing:0.729px;">d-------</div>
<svg style="position:absolute;left:6px;top:480px" width="20" height="28" viewBox="0 0 20 28"><defs><linearGradient id="fb" x1="0" y1="0" x2="1" y2="0"><stop offset="0" stop-color="#EEC660"/><stop offset="1" stop-color="#F8D878"/></linearGradient></defs><path d="M1 1H17V14.5L19 16.5V23.5H6V27.5L1 24Z" fill="url(#fb)"/><path d="M1 1L6.5 5.5V27.5L1 24Z" fill="#FCE39C"/><path d="M6.5 5.5V27.5" stroke="#F6D47A" stroke-width="0.6"/></svg>
<div style="left:36.80px;top:484px;font-size:12.6px;line-height:20px;font-weight:bold;">[diagnostics]</div>
<div style="left:329.00px;top:484px;font-size:12.6px;line-height:20px;font-weight:bold;letter-spacing:0.425px;">&lt;DIR&gt;</div>
<div style="left:389.80px;top:484px;font-size:12.6px;line-height:20px;font-weight:bold;letter-spacing:0.011px;">07.12.2019 12:31:03</div>
<div style="left:512.20px;top:484px;font-size:12.6px;line-height:20px;font-weight:bold;letter-spacing:0.729px;">d-------</div>
<svg style="position:absolute;left:6px;top:514px" width="20" height="28" viewBox="0 0 20 28"><defs><linearGradient id="fb" x1="0" y1="0" x2="1" y2="0"><stop offset="0" stop-color="#EEC660"/><stop offset="1" stop-color="#F8D878"/></linearGradient></defs><path d="M1 1H17V14.5L19 16.5V23.5H6V27.5L1 24Z" fill="url(#fb)"/><path d="M1 1L6.5 5.5V27.5L1 24Z" fill="#FCE39C"/><path d="M6.5 5.5V27.5" stroke="#F6D47A" stroke-width="0.6"/></svg>
<div style="left:36.80px;top:518px;font-size:12.6px;line-height:20px;font-weight:bold;letter-spacing:0.150px;">[DiagTrack]</div>
<div style="left:329.00px;top:518px;font-size:12.6px;line-height:20px;font-weight:bold;letter-spacing:0.425px;">&lt;DIR&gt;</div>
<div style="left:389.80px;top:518px;font-size:12.6px;line-height:20px;font-weight:bold;letter-spacing:0.011px;">06.10.2021 16:36:17</div>
<div style="left:512.20px;top:518px;font-size:12.6px;line-height:20px;font-weight:bold;letter-spacing:0.729px;">d-------</div>
<svg style="position:absolute;left:6px;top:548px" width="20" height="28" viewBox="0 0 20 28"><defs><linearGradient id="fb" x1="0" y1="0" x2="1" y2="0"><stop offset="0" stop-color="#EEC660"/><stop offset="1" stop-color="#F8D878"/></linearGradient></defs><path d="M1 1H17V14.5L19 16.5V23.5H6V27.5L1 24Z" fill="url(#fb)"/><path d="M1 1L6.5 5.5V27.5L1 24Z" fill="#FCE39C"/><path d="M6.5 5.5V27.5" stroke="#F6D47A" stroke-width="0.6"/></svg>
<div style="left:36.80px;top:552px;font-size:12.6px;line-height:20px;font-weight:bold;letter-spacing:0.146px;">[DigitalLocker]</div>
<div style="left:329.00px;top:552px;font-size:12.6px;line-height:20px;font-weight:bold;letter-spacing:0.425px;">&lt;DIR&gt;</div>
<div style="left:389.80px;top:552px;font-size:12.6px;line-height:20px;font-weight:bold;letter-spacing:0.011px;">07.12.2019 17:34:32</div>
<div style="left:512.20px;top:552px;font-size:12.6px;line-height:20px;font-weight:bold;letter-spacing:0.729px;">d-------</div>
<svg style="position:absolute;left:6px;top:582px" width="20" height="28" viewBox="0 0 20 28"><defs><linearGradient id="fb" x1="0" y1="0" x2="1" y2="0"><stop offset="0" stop-color="#EEC660"/><stop offset="1" stop-color="#F8D878"/></linearGradient></defs><path d="M1 1H17V14.5L19 16.5V23.5H6V27.5L1 24Z" fill="url(#fb)"/><path d="M1 1L6.5 5.5V27.5L1 24Z" fill="#FCE39C"/><path d="M6.5 5.5V27.5" stroke="#F6D47A" stroke-width="0.6"/></svg>
<div style="left:36.80px;top:586px;font-size:12.6px;line-height:20px;font-weight:bold;letter-spacing:-0.108px;">[en-US]</div>
<div style="left:329.00px;top:586px;font-size:12.6px;line-height:20px;font-weight:bold;letter-spacing:0.425px;">&lt;DIR&gt;</div>
<div style="left:389.80px;top:586px;font-size:12.6px;line-height:20px;font-weight:bold;letter-spacing:0.011px;">07.12.2019 17:34:32</div>
<div style="left:512.20px;top:586px;font-size:12.6px;line-height:20px;font-weight:bold;letter-spacing:0.729px;">d-------</div>
<svg style="position:absolute;left:6px;top:616px" width="20" height="28" viewBox="0 0 20 28"><defs><linearGradient id="fb" x1="0" y1="0" x2="1" y2="0"><stop offset="0" stop-color="#EEC660"/><stop offset="1" stop-color="#F8D878"/></linearGradient></defs><path d="M1 1H17V14.5L19 16.5V23.5H6V27.5L1 24Z" fill="url(#fb)"/><path d="M1 1L6.5 5.5V27.5L1 24Z" fill="#FCE39C"/><path d="M6.5 5.5V27.5" stroke="#F6D47A" stroke-width="0.6"/></svg>
<div style="left:36.80px;top:620px;font-size:12.6px;line-height:20px;font-weight:bold;letter-spacing:-0.048px;">[GameBarPresenceWriter]</div>
<div style="left:329.00px;top:620px;font-size:12.6px;line-height:20px;font-weight:bold;letter-spacing:0.425px;">&lt;DIR&gt;</div>
<div style="left:389.80px;top:620px;font-size:12.6px;line-height:20px;font-weight:bold;letter-spacing:0.011px;">07.12.2019 12:14:52</div>
<div style="left:512.20px;top:620px;font-size:12.6px;line-height:20px;font-weight:bold;letter-spacing:0.729px;">d-------</div>
<svg style="position:absolute;left:6px;top:650px" width="20" height="28" viewBox="0 0 20 28"><defs><linearGradient id="fb" x1="0" y1="0" x2="1" y2="0"><stop offset="0" stop-color="#EEC660"/><stop offset="1" stop-color="#F8D878"/></linearGradient></defs><path d="M1 1H17V14.5L19 16.5V23.5H6V27.5L1 24Z" fill="url(#fb)"/><path d="M1 1L6.5 5.5V27.5L1 24Z" fill="#FCE39C"/><path d="M6.5 5.5V27.5" stroke="#F6D47A" stroke-width="0.6"/></svg>
<div style="left:36.80px;top:654px;font-size:12.6px;line-height:20px;font-weight:bold;letter-spacing:0.200px;">[Globalization]</div>
<div style="left:329.00px;top:654px;font-size:12.6px;line-height:20px;font-weight:bold;letter-spacing:0.425px;">&lt;DIR&gt;</div>
<div style="left:389.80px;top:654px;font-size:12.6px;line-height:20px;font-weight:bold;letter-spacing:0.011px;">07.12.2019 12:31:03</div>
<div style="left:512.20px;top:654px;font-size:12.6px;line-height:20px;font-weight:bold;letter-spacing:0.729px;">d-------</div>
<svg style="position:absolute;left:6px;top:684px" width="20" height="28" viewBox="0 0 20 28"><defs><linearGradient id="fb" x1="0" y1="0" x2="1" y2="0"><stop offset="0" stop-color="#EEC660"/><stop offset="1" stop-color="#F8D878"/></linearGradient></defs><path d="M1 1H17V14.5L19 16.5V23.5H6V27.5L1 24Z" fill="url(#fb)"/><path d="M1 1L6.5 5.5V27.5L1 24Z" fill="#FCE39C"/><path d="M6.5 5.5V27.5" stroke="#F6D47A" stroke-width="0.6"/></svg>
<div style="left:36.80px;top:688px;font-size:12.6px;line-height:20px;font-weight:bold;letter-spacing:0.270px;">[Help]</div>
<div style="left:329.00px;top:688px;font-size:12.6px;line-height:20px;font-weight:bold;letter-spacing:0.425px;">&lt;DIR&gt;</div>
<div style="left:389.80px;top:688px;font-size:12.6px;line-height:20px;font-weight:bold;letter-spacing:0.011px;">07.12.2019 17:34:32</div>
<div style="left:512.20px;top:688px;font-size:12.6px;line-height:20px;font-weight:bold;letter-spacing:0.729px;">d-------</div>
<svg style="position:absolute;left:6px;top:718px" width="20" height="28" viewBox="0 0 20 28"><defs><linearGradient id="fb" x1="0" y1="0" x2="1" y2="0"><stop offset="0" stop-color="#EEC660"/><stop offset="1" stop-color="#F8D878"/></linearGradient></defs><path d="M1 1H17V14.5L19 16.5V23.5H6V27.5L1 24Z" fill="url(#fb)"/><path d="M1 1L6.5 5.5V27.5L1 24Z" fill="#FCE39C"/><path d="M6.5 5.5V27.5" stroke="#F6D47A" stroke-width="0.6"/></svg>
<div style="left:36.80px;top:722px;font-size:12.6px;line-height:20px;font-weight:bold;">[IdentityCRL]</div>
<div style="left:329.00px;top:722px;font-size:12.6px;line-height:20px;font-weight:bold;letter-spacing:0.425px;">&lt;DIR&gt;</div>
<div style="left:389.80px;top:722px;font-size:12.6px;line-height:20px;font-weight:bold;letter-spacing:0.011px;">07.12.2019 12:31:03</div>
<div style="left:512.20px;top:722px;font-size:12.6px;line-height:20px;font-weight:bold;letter-spacing:0.729px;">d-------</div>
</div>
<div style="left:626px;top:167px;width:16px;height:742px;background:#F0F0F0"></div>
<div style="left:626px;top:183px;width:15px;height:155px;background:#CDCDCD"></div>
<svg style="position:absolute;left:629px;top:172px" width="10" height="6" viewBox="0 0 10 6"><path d="M1 5L5 1L9 5" stroke="#606060" stroke-width="1.6" fill="none"/></svg>
<svg style="position:absolute;left:629px;top:898px" width="10" height="6" viewBox="0 0 10 6"><path d="M1 1L5 5L9 1" stroke="#606060" stroke-width="1.6" fill="none"/></svg>
<svg style="position:absolute;left:664px;top:172px" width="20" height="24" viewBox="0 0 20 24"><ellipse cx="8" cy="21.5" rx="8" ry="1.2" fill="rgba(0,0,0,0.07)"/><path d="M8 1.4L15.6 8.6H11V21.2H5.2V8.6H0.4Z" fill="#AAC7E7" stroke="#2F62AA" stroke-width="1.1" stroke-linejoin="round"/></svg>
<div style="left:690.00px;top:173px;font-size:12px;line-height:20px;">Name</div>
<div style="left:778px;top:166px;width:1px;height:34px;background:#E5E5E5"></div>
<div style="left:782.50px;top:173px;font-size:12px;line-height:20px;">Ext</div>
<div style="left:905px;top:166px;width:1px;height:34px;background:#E5E5E5"></div>
<div style="left:909.50px;top:173px;font-size:12px;line-height:20px;">Size</div>
<div style="left:1032px;top:166px;width:1px;height:34px;background:#E5E5E5"></div>
<div style="left:1036.50px;top:173px;font-size:12px;line-height:20px;">Date</div>
<div style="left:1159px;top:166px;width:1px;height:34px;background:#E5E5E5"></div>
<div style="left:1163.50px;top:173px;font-size:12px;line-height:20px;">Attr</div>
<div style="left:1286px;top:166px;width:1px;height:34px;background:#E5E5E5"></div>
<div style="left:653px;top:201px;width:157px;height:132px;border:1px solid #000"></div>
<div style="left:655.00px;top:333px;font-size:12.6px;line-height:20px;font-weight:bold;letter-spacing:0.167px;">[..]</div>
<div style="left:812px;top:201px;width:157px;height:132px;border:1px solid #000"></div>
<div style="left:813.50px;top:333px;font-size:12.6px;line-height:20px;font-weight:bold;letter-spacing:0.219px;">img10.jpg</div>
<div style="left:971px;top:201px;width:157px;height:132px;border:1px solid #000"></div>
<div style="left:972.20px;top:333px;font-size:12.6px;line-height:20px;font-weight:bold;letter-spacing:0.412px;">img11.jpg</div>
<div style="left:1130px;top:201px;width:157px;height:132px;border:1px solid #000"></div>
<div style="left:1131.50px;top:333px;font-size:12.6px;line-height:20px;font-weight:bold;letter-spacing:0.256px;">img12.jpg</div>
<div style="left:653px;top:352px;width:157px;height:132px;border:1px solid #000"></div>
<div style="left:654.50px;top:484px;font-size:12.6px;line-height:20px;font-weight:bold;letter-spacing:0.250px;">img7.jpg</div>
<div style="left:812px;top:352px;width:157px;height:132px;border:1px solid #000"></div>
<div style="left:813.00px;top:484px;font-size:12.6px;line-height:20px;font-weight:bold;letter-spacing:0.364px;">img8.jpg</div>
<div style="left:971px;top:352px;width:157px;height:132px;border:1px solid #000"></div>
<div style="left:972.30px;top:484px;font-size:12.6px;line-height:20px;font-weight:bold;letter-spacing:0.307px;">img9.jpg</div>
<svg style="position:absolute;left:826px;top:227px" width="128" height="80" viewBox="0 0 128 80"><defs><filter id="i10b8" x="-50%" y="-50%" width="200%" height="200%"><feGaussianBlur stdDeviation="8"/></filter><filter id="i10b4" x="-50%" y="-50%" width="200%" height="200%"><feGaussianBlur stdDeviation="4"/></filter><filter id="i10b2" x="-50%" y="-50%" width="200%" height="200%"><feGaussianBlur stdDeviation="1.6"/></filter><filter id="i10b1" x="-50%" y="-50%" width="200%" height="200%"><feGaussianBlur stdDeviation="0.7"/></filter><clipPath id="i10c"><rect width="128" height="80"/></clipPath></defs><g clip-path="url(#i10c)"><rect width="128" height="80" fill="#3A3620"/><g filter="url(#i10b8)"><rect x="-10" y="-10" width="150" height="30" fill="#34443A"/><ellipse cx="12" cy="2" rx="30" ry="12" fill="#5098A8"/><ellipse cx="62" cy="4" rx="22" ry="8" fill="#3C5A50"/><ellipse cx="45" cy="40" rx="45" ry="16" fill="#5E5024"/><ellipse cx="15" cy="50" rx="18" ry="14" fill="#524418"/><rect x="-10" y="66" width="90" height="30" fill="#1C1C10"/><ellipse cx="96" cy="54" rx="18" ry="20" fill="#A85010"/><ellipse cx="80" cy="64" rx="12" ry="8" fill="#7A3810"/><rect x="112" y="-10" width="30" height="60" fill="#1A1812"/><ellipse cx="122" cy="72" rx="8" ry="10" fill="#7A3A10"/></g><g filter="url(#i10b1)"><path d="M91 44L93.5 80" stroke="#2A1406" stroke-width="1.6"/><path d="M43 62L43.5 80" stroke="#2A1A0A" stroke-width="1.4"/><path d="M76 12C80 15 84 22 86 26C87 17 88 11 89 10C91 13 92 19 92 25C94 17 98 11 103 11C104 24 100 38 92 45C83 42 77 28 76 12Z" fill="#F04A1E"/><path d="M86 28C87 20 88 14 89 12C91 16 92 22 92 28C90 34 88 34 86 28Z" fill="#FF8030"/><path d="M37 42C38 36 42 35 44 37C46 35 50 38 50 44C50 56 48 64 43 66C38 64 36 56 37 42Z" fill="#D82A18"/><ellipse cx="42" cy="46" rx="3.5" ry="7" fill="#F04A28"/></g></g></svg>
<svg style="position:absolute;left:985px;top:227px" width="128" height="80" viewBox="0 0 128 80"><defs><filter id="i11b8" x="-50%" y="-50%" width="200%" height="200%"><feGaussianBlur stdDeviation="8"/></filter><filter id="i11b4" x="-50%" y="-50%" width="200%" height="200%"><feGaussianBlur stdDeviation="4"/></filter><filter id="i11b2" x="-50%" y="-50%" width="200%" height="200%"><feGaussianBlur stdDeviation="1.6"/></filter><filter id="i11b1" x="-50%" y="-50%" width="200%" height="200%"><feGaussianBlur stdDeviation="0.7"/></filter><clipPath id="i11c"><rect width="128" height="80"/></clipPath></defs><g clip-path="url(#i11c)"><defs><linearGradient id="i11g" x1="0" y1="0" x2="1" y2="0"><stop offset="0" stop-color="#98CC78"/><stop offset="0.45" stop-color="#C8E8A8"/><stop offset="1" stop-color="#E2F4D4"/></linearGradient></defs><rect width="128" height="80" fill="url(#i11g)"/><g filter="url(#i11b8)"><ellipse cx="10" cy="10" rx="20" ry="20" fill="#88C068"/><ellipse cx="60" cy="10" rx="18" ry="20" fill="#E0F4D0"/><ellipse cx="35" cy="45" rx="18" ry="25" fill="#B0DC90"/><ellipse cx="55" cy="75" rx="25" ry="8" fill="#E0F4DA"/></g><g filter="url(#i11b1)"><path d="M56 72C68 62 84 56 94 54L94 62C82 68 68 76 56 74Z" fill="#F07474"/><path d="M98 50C110 46 120 46 130 48V64C118 64 108 62 96 60Z" fill="#F27C7C"/><path d="M96 46C104 40 114 36 124 34C120 44 110 50 98 54Z" fill="#F8A8A4"/><path d="M62 55C72 52 82 52 88 54L88 60C78 62 70 61 62 59Z" fill="#F8B8AC"/><path d="M88 58C94 60 99 66 100 76L95 78C92 70 89 64 88 58Z" fill="#E85848"/><ellipse cx="98" cy="78" rx="3" ry="3" fill="#609030"/></g><g filter="url(#i11b1)"><ellipse cx="92" cy="50" rx="10" ry="8" fill="#FADCD0"/><path d="M90 9C87 14 86 24 88 32C89 38 90 42 91 44" stroke="#E05858" stroke-width="2.2" fill="none"/><circle cx="90" cy="9" r="2.3" fill="#C83030"/><path d="M80 34L88 44M84 38L90 46M90 30L93 44M93 40L96 46" stroke="#D83838" stroke-width="2.4" stroke-linecap="round"/></g></g></svg>
<svg style="position:absolute;left:1144px;top:227px" width="128" height="80" viewBox="0 0 128 80"><defs><filter id="i12b8" x="-50%" y="-50%" width="200%" height="200%"><feGaussianBlur stdDeviation="8"/></filter><filter id="i12b4" x="-50%" y="-50%" width="200%" height="200%"><feGaussianBlur stdDeviation="4"/></filter><filter id="i12b2" x="-50%" y="-50%" width="200%" height="200%"><feGaussianBlur stdDeviation="1.6"/></filter><filter id="i12b1" x="-50%" y="-50%" width="200%" height="200%"><feGaussianBlur stdDeviation="0.7"/></filter><clipPath id="i12c"><rect width="128" height="80"/></clipPath></defs><g clip-path="url(#i12c)"><defs><linearGradient id="i12g" x1="0" y1="0" x2="0" y2="1"><stop offset="0" stop-color="#D4DE10"/><stop offset="0.3" stop-color="#E8E868"/><stop offset="0.6" stop-color="#E8DC88"/><stop offset="0.75" stop-color="#B4D858"/><stop offset="1" stop-color="#6CBE10"/></linearGradient></defs><rect width="128" height="80" fill="url(#i12g)"/><g filter="url(#i12b8)"><ellipse cx="8" cy="78" rx="25" ry="10" fill="#50A808"/><ellipse cx="120" cy="30" rx="8" ry="22" fill="#F0D8A8"/><ellipse cx="118" cy="72" rx="18" ry="12" fill="#78C808"/><ellipse cx="92" cy="40" rx="14" ry="30" fill="#A8CC40"/></g><g filter="url(#i12b1)"><path d="M93 8C82 22 74 38 78 52C82 62 90 70 97 74C98 58 97 40 95 24Z" fill="#5AAC22"/><path d="M93 8C95 26 97 50 97 74" stroke="#3C8010" stroke-width="1.4" fill="none"/><path d="M84 30L94 36M80 42L95 48M82 54L96 60" stroke="#8CCC40" stroke-width="0.8"/><path d="M108 0C101 14 98 32 101 48C103 56 105 60 107 62C113 48 116 30 114 10Z" fill="#62B428"/><path d="M108 2C109 20 109 40 107 62" stroke="#3C8A14" stroke-width="1.1" fill="none"/><path d="M103 22L108 28M102 36L108 42M112 20L108 26M113 34L108 40" stroke="#98D450" stroke-width="0.8"/></g></g></svg>
<svg style="position:absolute;left:667px;top:378px" width="128" height="80" viewBox="0 0 128 80"><defs><filter id="i7b8" x="-50%" y="-50%" width="200%" height="200%"><feGaussianBlur stdDeviation="8"/></filter><filter id="i7b4" x="-50%" y="-50%" width="200%" height="200%"><feGaussianBlur stdDeviation="4"/></filter><filter id="i7b2" x="-50%" y="-50%" width="200%" height="200%"><feGaussianBlur stdDeviation="1.6"/></filter><filter id="i7b1" x="-50%" y="-50%" width="200%" height="200%"><feGaussianBlur stdDeviation="0.7"/></filter><clipPath id="i7c"><rect width="128" height="80"/></clipPath></defs><g clip-path="url(#i7c)"><defs><linearGradient id="i7g" x1="0" y1="0" x2="1" y2="1"><stop offset="0" stop-color="#0E8494"/><stop offset="0.5" stop-color="#2A9CAC"/><stop offset="1" stop-color="#62B4C0"/></linearGradient></defs><rect width="128" height="80" fill="url(#i7g)"/><g filter="url(#i7b8)"><ellipse cx="12" cy="35" rx="14" ry="30" fill="#08707E"/><ellipse cx="40" cy="72" rx="22" ry="10" fill="#207888"/><ellipse cx="95" cy="55" rx="25" ry="18" fill="#70B8C4"/><ellipse cx="80" cy="8" rx="25" ry="8" fill="#30A0B0"/></g><g filter="url(#i7b1)"><path d="M120 0H80L76 6L70 4L74 14L62 6L64 22L52 20L56 26L44 28L54 32L50 35L64 34L72 30L84 26L90 20L96 16L104 14L112 8L118 4Z" fill="#C8102A"/><path d="M82 0L90 0L96 10L88 14Z" fill="#E83040"/><path d="M100 2L118 0L112 12L104 14Z" fill="#E02838"/><path d="M66 22C72 24 80 20 86 16" stroke="#F8A040" stroke-width="1" fill="none"/><path d="M64 34C63 40 62 46 63 52" stroke="#D01838" stroke-width="1.8" fill="none"/></g></g></svg>
<svg style="position:absolute;left:826px;top:378px" width="128" height="80" viewBox="0 0 128 80"><defs><filter id="i8b8" x="-50%" y="-50%" width="200%" height="200%"><feGaussianBlur stdDeviation="8"/></filter><filter id="i8b4" x="-50%" y="-50%" width="200%" height="200%"><feGaussianBlur stdDeviation="4"/></filter><filter id="i8b2" x="-50%" y="-50%" width="200%" height="200%"><feGaussianBlur stdDeviation="1.6"/></filter><filter id="i8b1" x="-50%" y="-50%" width="200%" height="200%"><feGaussianBlur stdDeviation="0.7"/></filter><clipPath id="i8c"><rect width="128" height="80"/></clipPath></defs><g clip-path="url(#i8c)"><defs><linearGradient id="i8g" x1="0" y1="0" x2="0" y2="1"><stop offset="0" stop-color="#F6E2F0"/><stop offset="0.6" stop-color="#FAEEF6"/><stop offset="1" stop-color="#E8C0DC"/></linearGradient></defs><rect width="128" height="80" fill="url(#i8g)"/><g filter="url(#i8b8)"><ellipse cx="15" cy="78" rx="30" ry="10" fill="#E0A8D0"/><ellipse cx="10" cy="10" rx="20" ry="14" fill="#F4D6EC"/><ellipse cx="120" cy="40" rx="10" ry="30" fill="#F6DCEE"/></g><g filter="url(#i8b1)"><path d="M94 46L100 80" stroke="#B87878" stroke-width="1.4"/><path d="M44 18C60 28 78 38 90 42L86 46C72 42 56 30 44 18Z" fill="#F2A838"/><path d="M62 8C72 20 82 32 90 40L86 42C76 32 66 20 62 8Z" fill="#F4B040"/><path d="M80 0C88 10 92 24 94 40L90 40C86 26 82 12 80 0Z" fill="#F2A838"/><path d="M102 0C104 12 102 26 96 40L92 38C96 26 98 12 102 0Z" fill="#F4B444"/><path d="M110 4C108 18 104 30 96 42L94 40C100 28 104 16 110 4Z" fill="#F6C060" opacity="0.8"/><path d="M42 48C56 44 72 42 88 44" stroke="#E89868" stroke-width="1.2" fill="none"/><ellipse cx="92" cy="43" rx="7" ry="5" fill="#8C2C78"/></g></g></svg>
<svg style="position:absolute;left:985px;top:398px" width="128" height="40" viewBox="0 0 128 40"><defs><filter id="i9b8" x="-50%" y="-50%" width="200%" height="200%"><feGaussianBlur stdDeviation="8"/></filter><filter id="i9b4" x="-50%" y="-50%" width="200%" height="200%"><feGaussianBlur stdDeviation="4"/></filter><filter id="i9b2" x="-50%" y="-50%" width="200%" height="200%"><feGaussianBlur stdDeviation="1.6"/></filter><filter id="i9b1" x="-50%" y="-50%" width="200%" height="200%"><feGaussianBlur stdDeviation="0.7"/></filter><clipPath id="i9c"><rect width="128" height="40"/></clipPath></defs><g clip-path="url(#i9c)"><defs><linearGradient id="i9g" x1="0" y1="0" x2="1" y2="0"><stop offset="0" stop-color="#80C8A8"/><stop offset="0.12" stop-color="#D8E8E0"/><stop offset="0.3" stop-color="#ECEEEA"/><stop offset="0.5" stop-color="#D4E8DC"/><stop offset="0.62" stop-color="#B8E0CA"/><stop offset="0.84" stop-color="#5EC08E"/><stop offset="1" stop-color="#90D0B0"/></linearGradient></defs><rect width="128" height="40" fill="url(#i9g)"/><g filter="url(#i9b4)"><ellipse cx="4" cy="4" rx="12" ry="8" fill="#60B494"/><ellipse cx="35" cy="22" rx="18" ry="10" fill="#F0F0EE"/><ellipse cx="100" cy="36" rx="16" ry="6" fill="#78C8A0"/></g><g filter="url(#i9b1)"><path d="M80 22C84 28 88 34 91 40" stroke="#A05060" stroke-width="1.2" fill="none"/><circle cx="72" cy="11" r="4.2" fill="#D8409A"/><circle cx="80" cy="8" r="4.2" fill="#D03C90"/><circle cx="86" cy="14" r="4.2" fill="#D8449C"/><circle cx="84" cy="22" r="4.2" fill="#C8388A"/><circle cx="75" cy="22" r="4" fill="#D8409A"/><circle cx="70" cy="17" r="3.6" fill="#D04494"/><circle cx="78" cy="16" r="3.2" fill="#902058"/></g></g></svg>
<svg style="position:absolute;left:719px;top:254px" width="26" height="26" viewBox="0 0 26 26"><defs><linearGradient id="gg719254" x1="0" y1="0" x2="0.3" y2="1"><stop offset="0" stop-color="#7CB83A"/><stop offset="1" stop-color="#58B000"/></linearGradient></defs><ellipse cx="12" cy="24" rx="9" ry="1.8" fill="rgba(0,0,0,0.15)"/><path d="M11.5 1L23 14H17.7V23H6.2V14H0.5Z" fill="url(#gg719254)" stroke="#3A7000" stroke-width="1.1" stroke-linejoin="miter"/><path d="M11.5 3L20.6 13H16.6V22H7.3V13H2.6Z" fill="none" stroke="#A8D870" stroke-width="0.9"/></svg>
<div style="left:3.20px;top:908px;font-size:12px;line-height:20px;letter-spacing:-0.235px;">Selected: 0 of 8.8 M, files: 0 of 22, folders: 0 of 76</div>
<div style="left:653.00px;top:908px;font-size:12px;line-height:20px;">[..]</div>
<div style="left:1106.00px;top:908px;font-size:11.2px;line-height:20px;letter-spacing:-0.312px;">&lt;DIR&gt;</div>
<div style="left:1145.40px;top:908px;font-size:11px;line-height:20px;letter-spacing:-0.189px;">07.12.2019 12:15:01</div>
<div style="left:1250.50px;top:908px;font-size:12px;line-height:20px;letter-spacing:0.679px;">dr------</div>
<div style="left:3.00px;top:934px;font-size:12px;line-height:20px;letter-spacing:0.135px;">c:\Windows&gt;</div>
<div style="left:76px;top:931px;width:1217px;height:23px;background:#fff;border:1px solid #7A7A7A"></div>
<svg style="position:absolute;left:1280px;top:940px" width="9" height="6" viewBox="0 0 9 6"><path d="M0.5 0.5L4.5 4.5L8.5 0.5" stroke="#404040" stroke-width="1" fill="none"/></svg>
<div style="left:55.50px;top:958px;font-size:12px;line-height:20px;letter-spacing:-0.042px;">View F3</div>
<div style="left:208.30px;top:958px;font-size:12px;line-height:20px;letter-spacing:0.117px;">Edit F4</div>
<div style="left:356.20px;top:958px;font-size:12px;line-height:20px;letter-spacing:0.208px;">Copy F5</div>
<div style="left:511.90px;top:958px;font-size:12px;line-height:20px;letter-spacing:0.558px;">Move F6</div>
<div style="left:671.20px;top:958px;font-size:12px;line-height:20px;letter-spacing:0.368px;">Directory F7</div>
<div style="left:849.70px;top:958px;font-size:12px;line-height:20px;letter-spacing:0.225px;">Delete F8</div>
<div style="left:1012.70px;top:958px;font-size:12px;line-height:20px;letter-spacing:0.355px;">Terminal F9</div>
<div style="left:1186.00px;top:958px;font-size:12px;line-height:20px;letter-spacing:0.561px;">Exit Alt+X</div>
</body></html>
